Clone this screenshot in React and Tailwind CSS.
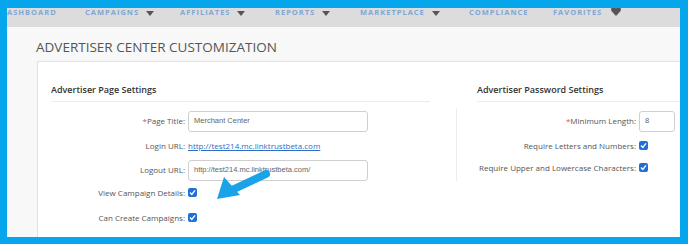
import React from "react";

const navItems = [
  { label: "ASHBOARD", caret: false, w: "w-[78px]" },
  { label: "CAMPAIGNS", caret: true, w: "w-[95px]" },
  { label: "AFFILIATES", caret: true, w: "w-[95px]" },
  { label: "REPORTS", caret: true, w: "w-[85px]" },
  { label: "MARKETPLACE", caret: true, w: "w-[109px]" },
  { label: "COMPLIANCE", caret: false, w: "w-[84px]" },
];

const Caret = () => (
  <svg width="8" height="5" viewBox="0 0 8 5" className="ml-[7px]">
    <path d="M0 0 L8 0 L4 5 Z" fill="#555" />
  </svg>
);

const Heart = () => (
  <svg width="10" height="9" viewBox="0 0 10 9" className="ml-[9px] -mt-[4px]">
    <path d="M5 9 L0.6 4.2 C-0.6 2.6 0.3 0 2.5 0 C3.7 0 4.5 0.8 5 1.6 C5.5 0.8 6.3 0 7.5 0 C9.7 0 10.6 2.6 9.4 4.2 Z" fill="#555" />
  </svg>
);

const Check = () => (
  <span className="inline-flex items-center justify-center w-[9px] h-[9px] rounded-[2px] bg-[#1f6fd6]">
    <svg width="7" height="7" viewBox="0 0 7 7">
      <path d="M1 3.6 L2.8 5.4 L6 1.4" stroke="#fff" strokeWidth="1.4" fill="none" />
    </svg>
  </span>
);

const Req = ({ children }) => (
  <>
    <span className="text-[#d9534f]">*</span>
    {children}
  </>
);

const Input = ({ value, w }) => (
  <div
    className={`${w} h-[21px] border border-[#cfcfcf] rounded-[3px] bg-white flex items-center pl-[5px] text-[7.5px] text-[#666]`}
    style={{ fontFamily: '"Liberation Sans", Arial, sans-serif' }}
  >
    {value}
  </div>
);

const Row = ({ label, children, cls }) => (
  <div className={`flex items-center ${cls}`}>
    <div className="w-[137px] text-right pr-[3px] whitespace-nowrap">{label}</div>
    <div className="flex items-center">{children}</div>
  </div>
);

const RightRow = ({ label, children, cls }) => (
  <div className={`flex items-center ${cls}`}>
    <div className="w-[182px] text-right pr-[3px] whitespace-nowrap">{label}</div>
    <div className="flex items-center">{children}</div>
  </div>
);

export default function App() {
  return (
    <div
      className="w-[688px] h-[244px] bg-[#05a6ec] pt-[8px] pl-[7px] pr-[8px] pb-[7px] overflow-hidden"
      style={{ fontFamily: '"Open Sans", "Liberation Sans", sans-serif' }}
    >
      <div className="relative flex flex-col h-full bg-[#f8f8f8] overflow-hidden">
        <div className="h-[19px] shrink-0 bg-[#dcdcdc] flex items-start pt-[1px] leading-none text-[7.5px] font-bold tracking-[1px] text-[#7ea7d8]">
          {navItems.map((n) => (
            <div key={n.label} className={`${n.w} h-[8px] flex items-center shrink-0`}>
              <span>{n.label}</span>
              {n.caret && <Caret />}
            </div>
          ))}
          <div className="h-[8px] flex items-center">
            <span>FAVORITES</span>
            <Heart />
          </div>
        </div>

        <div className="h-[34px] shrink-0 pl-[29px] pt-[7px] flex items-center text-[13.5px] text-[#555]">
          ADVERTISER CENTER CUSTOMIZATION
        </div>

        <div className="flex-1 ml-[30px] bg-white border-l border-t border-[#e2e2e2] flex text-[8px] text-[#555]">
          <div className="w-[393px] pl-[13px] shrink-0">
            <div className="w-[379px] border-b border-[#ececec] pt-[21px] pb-[4px] text-[9px] font-semibold text-[#333]">
              Advertiser Page Settings
            </div>
            <Row label={<Req>Page Title:</Req>} cls="mt-[9px] h-[21px]">
              <Input value="Merchant Center" w="w-[180px]" />
            </Row>
            <Row label="Login URL:" cls="mt-[6px] h-[16px]">
              <span className="text-[#2f6bc7] underline">http://test214.mc.linktrustbeta.com</span>
            </Row>
            <Row label="Logout URL:" cls="mt-[6px] h-[21px]">
              <Input value="http://test214.mc.linktrustbeta.com/" w="w-[180px]" />
            </Row>
            <Row label="View Campaign Details:" cls="mt-[5px] h-[14px]">
              <Check />
            </Row>
            <Row label="Can Create Campaigns:" cls="mt-[11px] h-[14px]">
              <Check />
            </Row>
          </div>

          <div className="w-[25px] shrink-0" />

          <div className="flex-1">
            <div className="ml-[21px] border-b border-[#ececec] pt-[21px] pb-[4px] text-[9px] font-semibold text-[#333]">
              Advertiser Password Settings
            </div>
            <div className="mt-[6px] border-l border-[#ececec] h-[73px] pt-[3px]">
              <RightRow label={<Req>Minimum Length:</Req>} cls="h-[21px]">
                <Input value="8" w="w-[36px]" />
              </RightRow>
              <RightRow label="Require Letters and Numbers:" cls="mt-[6px] h-[16px]">
                <Check />
              </RightRow>
              <RightRow label="Require Upper and Lowercase Characters:" cls="mt-[6px] h-[16px]">
                <Check />
              </RightRow>
            </div>
          </div>
        </div>

        <svg
          className="absolute left-[203px] top-[158px]"
          width="62"
          height="40"
          viewBox="0 0 62 40"
        >
          <path d="M56 8 L22 24" stroke="#1aa3e6" strokeWidth="8" strokeLinecap="round" />
          <path d="M7 33 L14 11 L30 29 Z" fill="#1aa3e6" />
        </svg>
      </div>
    </div>
  );
}
